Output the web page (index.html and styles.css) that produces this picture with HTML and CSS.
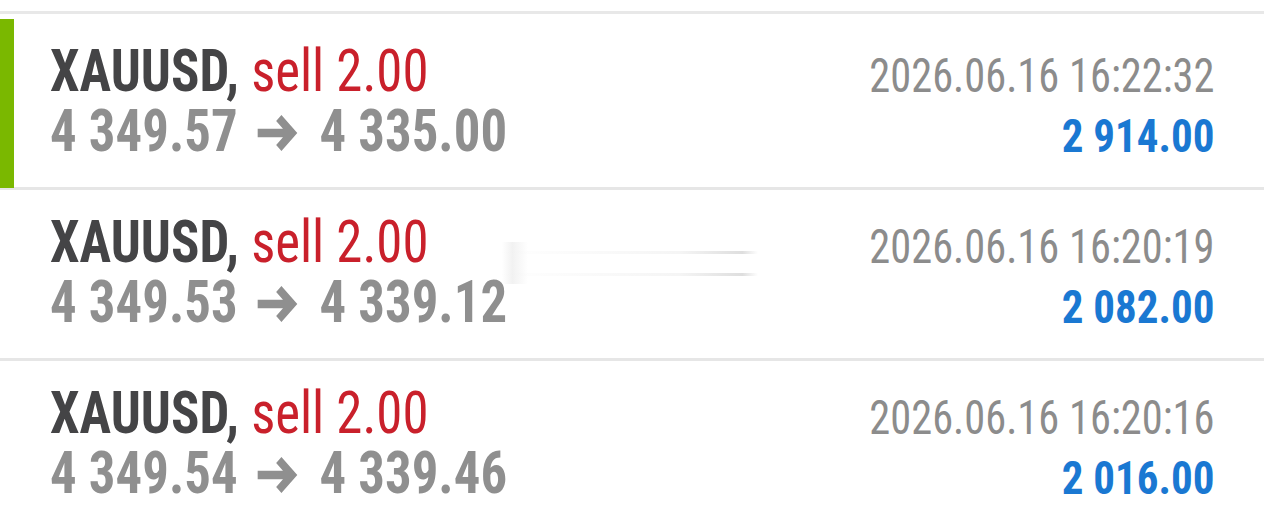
FILE: index.html
```html
<!DOCTYPE html>
<html lang="en">
<head>
    <meta charset="UTF-8">
    <title>History</title>
    <link rel="stylesheet" href="styles.css">
</head>
<body>

<div class="deals">
    <div class="deal active">
        <div class="left">
            <div class="title"><span class="symbol">XAUUSD,</span> <span class="type">sell 2.00</span></div>
            <div class="prices">4 349.57<svg class="arrow" viewBox="0 0 46 36"><path d="M0 18 H39 M24 3 L39 18 L24 33" /></svg>4 335.00</div>
        </div>
        <div class="right">
            <div class="time">2026.06.16 16:22:32</div>
            <div class="profit">2 914.00</div>
        </div>
    </div>

    <div class="deal">
        <div class="left">
            <div class="title"><span class="symbol">XAUUSD,</span> <span class="type">sell 2.00</span></div>
            <div class="prices">4 349.53<svg class="arrow" viewBox="0 0 46 36"><path d="M0 18 H39 M24 3 L39 18 L24 33" /></svg>4 339.12</div>
        </div>
        <div class="smudge"></div>
        <div class="right">
            <div class="time">2026.06.16 16:20:19</div>
            <div class="profit">2 082.00</div>
        </div>
    </div>

    <div class="deal">
        <div class="left">
            <div class="title"><span class="symbol">XAUUSD,</span> <span class="type">sell 2.00</span></div>
            <div class="prices">4 349.54<svg class="arrow" viewBox="0 0 46 36"><path d="M0 18 H39 M24 3 L39 18 L24 33" /></svg>4 339.46</div>
        </div>
        <div class="right">
            <div class="time">2026.06.16 16:20:16</div>
            <div class="profit">2 016.00</div>
        </div>
    </div>
</div>

</body>
</html>
```

FILE: styles.css
```css
body { margin: 0; background-color: #fff; font-family: Roboto, "Liberation Sans", sans-serif; font-stretch: 75%; overflow: hidden; }
.deals { margin-top: 11px; border-top: 3px solid #e8e8e8; padding-top: 5px; }
.deal {
    position: relative;
    display: flex;
    justify-content: space-between;
    height: 171px;
    padding: 22px 50px 0 50px;
    box-sizing: border-box;
    border-bottom: 3px solid #e6e6e6;
}
.deal:last-child { border-bottom: none; }
.deal.active::before {
    content: "";
    position: absolute;
    left: 0; top: 0; bottom: -1px;
    width: 14px;
    background-color: #7ab800;
}
/* the app uses Roboto Condensed, squeeze a bit more to match */
.title, .prices {
    font-size: 60px;
    line-height: 60px;
    white-space: nowrap;
    transform: scaleX(0.88);
    transform-origin: left;
}
.symbol { color: #444446; font-weight: bold; }
.type { color: #c9202b; }
.prices { color: #8f8f8f; font-weight: bold; }
.arrow {
    width: 52px;
    height: 36px;
    margin: 0 21px 0 20px;
    vertical-align: 0;
}
.arrow path { fill: none; stroke: #8f8f8f; stroke-width: 8.5; stroke-linejoin: miter; }
.right { padding-top: 5px; text-align: right; }
.time, .profit { white-space: nowrap; transform-origin: right; }
.time { font-size: 48px; line-height: 60px; color: #8c8c8c; transform: scaleX(0.884); }
.profit { font-size: 47px; line-height: 60px; color: #1a78d2; font-weight: bold; transform: scaleX(0.915); }
.smudge {
    position: absolute;
    left: 498px; top: 52px;
    width: 260px; height: 42px;
    background:
        linear-gradient(90deg, rgba(240,240,240,0) 0%, rgba(238,238,238,0.6) 70%, rgba(222,222,222,1) 94%, rgba(255,255,255,0) 100%) 0 9px / 100% 3px no-repeat,
        linear-gradient(90deg, rgba(240,240,240,0) 0%, rgba(238,238,238,0.6) 70%, rgba(222,222,222,1) 94%, rgba(255,255,255,0) 100%) 0 31px / 100% 3px no-repeat,
        linear-gradient(90deg, rgba(244,244,244,0) 0%, rgba(240,240,240,0.9) 40%, rgba(244,244,244,0) 100%) 4px 0 / 26px 100% no-repeat;
}
```
